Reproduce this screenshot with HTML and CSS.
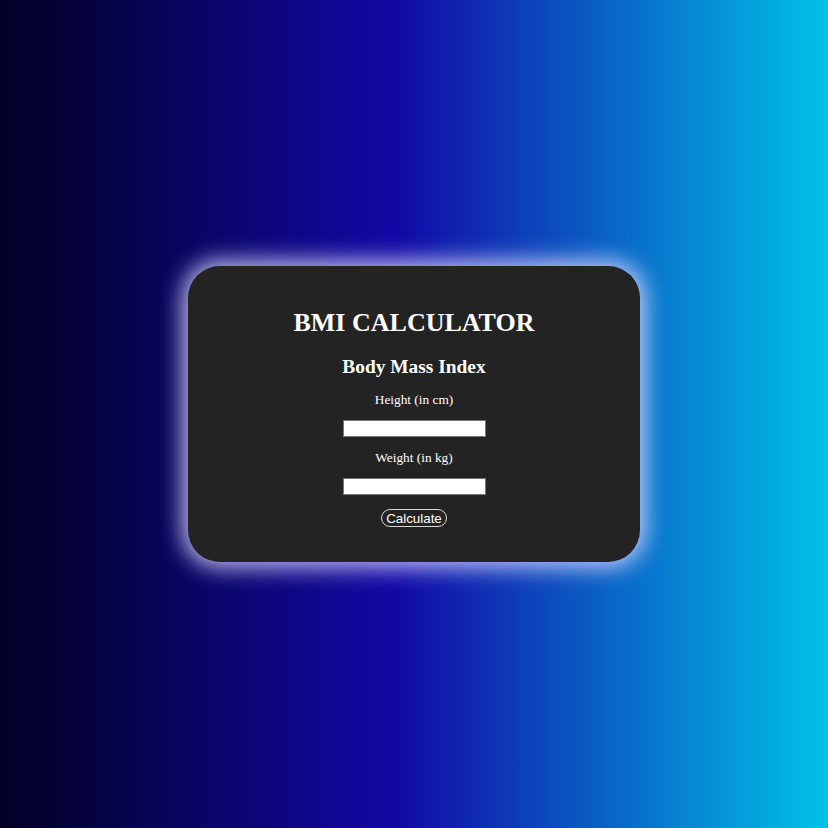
FILE: index.html
```html
<!DOCTYPE html>
<html>
<head>
<meta charset="utf-8">
<link rel="stylesheet" href="styles.css">
</head>
<body>
<div class="page">
  <div class="card">
    <h1 class="title">BMI CALCULATOR</h1>
    <h2 class="subtitle">Body Mass Index</h2>
    <label class="label label-first">Height (in cm)</label>
    <input class="field" type="text">
    <label class="label">Weight (in kg)</label>
    <input class="field" type="text">
    <button class="btn">Calculate</button>
  </div>
</div>
</body>
</html>
```

FILE: styles.css
```css
html, body {
  margin: 0;
  padding: 0;
  height: 100%;
}
body {
  background: linear-gradient(90deg, #020024 0%, #1209a6 48%, #00c2e8 100%);
  font-family: "Liberation Serif", "Times New Roman", serif;
}
.page {
  height: 828px;
  display: flex;
  align-items: center;
  justify-content: center;
}
.card {
  width: 452px;
  height: 296px;
  box-sizing: border-box;
  background: #232323;
  border-radius: 32px;
  box-shadow: 0 0 22px 6px rgba(215, 215, 255, 0.85);
  display: flex;
  flex-direction: column;
  align-items: center;
  padding-top: 42px;
  color: #fff;
}
.title {
  margin: 0;
  font-size: 26px;
  line-height: 30px;
  font-weight: bold;
}
.subtitle {
  margin: 17px 0 0;
  font-size: 19.4px;
  line-height: 23px;
  font-weight: bold;
}
.label {
  display: block;
  margin-top: 13px;
  font-size: 13.33px;
  line-height: 15px;
}
.label-first {
  margin-top: 14px;
}
.field {
  display: block;
  box-sizing: border-box;
  width: 143px;
  height: 17px;
  margin-top: 13px;
  border: 1px solid #767676;
  background: #fff;
  padding: 0 2px;
}
.btn {
  margin-top: 14px;
  box-sizing: border-box;
  height: 18px;
  padding: 0 4px;
  border: 1px solid #d8d8d8;
  border-radius: 9px;
  background: transparent;
  color: #fff;
  font-family: "Liberation Sans", Arial, sans-serif;
  font-size: 13.33px;
  line-height: 15px;
}
```
